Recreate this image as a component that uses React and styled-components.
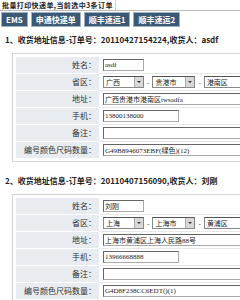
import React from "react";
import styled, { createGlobalStyle } from "styled-components";

const Global = createGlobalStyle`
  body {
    margin: 0;
    background: #fff;
    font-family: "Noto Sans CJK SC", "Liberation Sans", sans-serif;
    color: #222;
  }
`;

const orders = [
  {
    no: "20110427154224",
    person: "asdf",
    name: "asdf",
    region: ["广西", "贵港市", "港南区"],
    address: "广西贵港市港南区twsadfa",
    phone: "13800138000",
    note: "",
    code: "G49B8946073EBF(绿色)(12)",
  },
  {
    no: "20110407156090",
    person: "刘刚",
    name: "刘刚",
    region: ["上海", "上海市", "黄浦区"],
    address: "上海市黄浦区上海人民路88号",
    phone: "13966668888",
    note: "",
    code: "G4D8F238CC6EDT()(1)",
  },
];

const App = () => {
  return (
    <Page>
      <Global />
      <TopBar>
        <TopText>批量打印快递单,当前选中3条订单</TopText>
      </TopBar>
      <Buttons>
        <Btn>EMS</Btn>
        <Btn>申通快递单</Btn>
        <Btn>顺丰速运1</Btn>
        <Btn>顺丰速运2</Btn>
      </Buttons>
      {orders.map((o, i) => (
        <Section key={o.no}>
          <Heading>
            {i + 1}、收货地址信息-订单号：{o.no},收货人：{o.person}
          </Heading>
          <Box>
            <Row>
              <Label>姓名：</Label>
              <Value>
                <Field w="41px" defaultValue={o.name} />
              </Value>
            </Row>
            <Row>
              <Label>省区：</Label>
              <Value>
                <Select w="41px">
                  <span>{o.region[0]}</span>
                  <Arrow />
                </Select>
                <Dash>-</Dash>
                <Select w="43px">
                  <span>{o.region[1]}</span>
                  <Arrow />
                </Select>
                <Dash>-</Dash>
                <Select w="46px">
                  <span>{o.region[2]}</span>
                  <Arrow />
                </Select>
              </Value>
            </Row>
            <Row>
              <Label>地址：</Label>
              <Value>
                <Field w="160px" defaultValue={o.address} />
              </Value>
            </Row>
            <Row>
              <Label>手机：</Label>
              <Value>
                <Field w="76px" defaultValue={o.phone} />
              </Value>
            </Row>
            <Row>
              <Label>备注：</Label>
              <Value>
                <Field w="160px" defaultValue={o.note} />
              </Value>
            </Row>
            <Row>
              <Label>编号颜色尺码数量：</Label>
              <Value>
                <Field w="160px" defaultValue={o.code} />
              </Value>
            </Row>
          </Box>
        </Section>
      ))}
    </Page>
  );
};

export default App;

const Page = styled.div`
  width: 240px;
  height: 300px;
  overflow: hidden;
`;

const TopBar = styled.div`
  height: 10px;
  border-bottom: 1px solid #bbb;
  padding-left: 2px;
  display: flex;
  align-items: center;
`;

const TopText = styled.span`
  font-size: 7px;
  font-weight: bold;
  letter-spacing: 0.4px;
  line-height: 10px;
  padding-right: 2px;
  border-right: 1px solid #ccc;
  white-space: nowrap;
`;

const Buttons = styled.div`
  display: flex;
  gap: 3px;
  padding: 1px 1px 0;
`;

const Btn = styled.button`
  height: 15px;
  padding: 0 4px;
  margin: 0;
  background: #3b5874;
  border: 1px solid #9fb1c2;
  color: #fff;
  font-family: "Noto Sans CJK SC", "Liberation Sans", sans-serif;
  font-size: 8px;
  font-weight: bold;
  line-height: 13px;
`;

const Section = styled.div`
  padding-top: 8px;
  & + & {
    padding-top: 14px;
  }
`;

const Heading = styled.div`
  padding-left: 5px;
  font-size: 8px;
  font-weight: bold;
  line-height: 9px;
  white-space: nowrap;
`;

const Box = styled.div`
  margin: 9px 0 0 12px;
  border: 1px solid #d4d4d4;
  border-right: none;
  padding: 3px 0 3px 3px;
  width: 240px;
`;

const Row = styled.div`
  display: flex;
  height: 16px;
  border-bottom: 1px solid #e8e8e8;
  &:last-child {
    border-bottom: none;
  }
`;

const Label = styled.div`
  width: 80px;
  flex: none;
  background: #e8ebef;
  border-bottom: 1px solid #fff;
  margin-bottom: -1px;
  margin-right: 2px;
  text-align: right;
  padding-right: 3px;
  font-size: 8px;
  line-height: 16px;
  color: #333;
  white-space: nowrap;
`;

const Value = styled.div`
  display: flex;
  align-items: center;
  padding-left: 2px;
`;

const Field = styled.input`
  width: ${(p) => p.w};
  height: 12px;
  box-sizing: border-box;
  padding: 0 1px;
  margin: 0;
  border: 1px solid #aaa;
  border-top-color: #666;
  border-left-color: #666;
  font-family: "Liberation Serif", "Noto Sans CJK SC", serif;
  font-size: 7px;
  color: #222;
  outline: none;
`;

const Select = styled.div`
  width: ${(p) => p.w};
  height: 12px;
  box-sizing: border-box;
  border: 1px solid #888;
  border-top-color: #555;
  display: flex;
  align-items: center;
  justify-content: space-between;
  font-size: 7px;
  padding-left: 2px;
  color: #222;
`;

const Arrow = styled.div`
  width: 8px;
  height: 10px;
  background: #d8d8d8;
  border-left: 1px solid #aaa;
  position: relative;
  &::after {
    content: "";
    position: absolute;
    left: 2px;
    top: 4px;
    border-left: 2px solid transparent;
    border-right: 2px solid transparent;
    border-top: 2px solid #333;
  }
`;

const Dash = styled.span`
  font-size: 7px;
  padding: 0 3px;
  color: #333;
`;
